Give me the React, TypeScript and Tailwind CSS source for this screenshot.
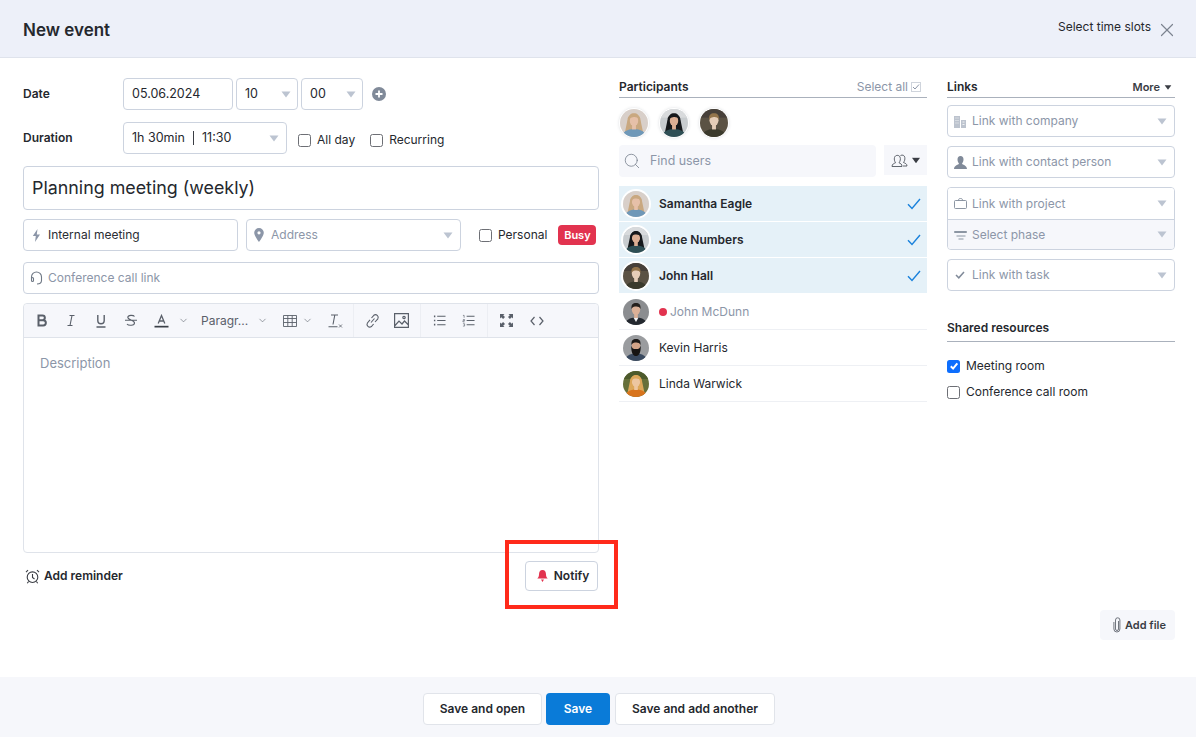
import { useId } from "react";
import type { ReactNode } from "react";
import { ChevronDown, Search, X } from "lucide-react";

const font = "font-['Inter','Liberation_Sans',sans-serif]";

const Caret = ({ className = "" }: { className?: string }) => (
  <svg width="10" height="7" viewBox="0 0 10 7" className={`shrink-0 ${className || "text-[#bcc4d1]"}`}>
    <path d="M0.5 0.5h9L5 6.5z" fill="currentColor" />
  </svg>
);

const Box = ({ checked = false, className = "" }: { checked?: boolean; className?: string }) =>
  checked ? (
    <span className={`flex h-[13px] w-[13px] shrink-0 items-center justify-center rounded-[2.5px] bg-[#0d6efd] ${className}`}>
      <svg width="10" height="10" viewBox="0 0 10 10">
        <path d="M1.8 5.2 4.1 7.6 8.3 2.4" fill="none" stroke="#fff" strokeWidth="2" />
      </svg>
    </span>
  ) : (
    <span className={`h-[13px] w-[13px] shrink-0 rounded-[2.5px] border border-[#6d6f75] bg-white ${className}`} />
  );

const Field = ({
  icon,
  text,
  muted = true,
  caret = true,
  className = "",
}: {
  icon?: ReactNode;
  text: string;
  muted?: boolean;
  caret?: boolean;
  className?: string;
}) => (
  <div className={`flex shrink-0 items-center rounded-[4px] border border-[#ccd3df] bg-white text-[12px] ${className || "h-8"}`}>
    {icon && <span className="flex w-[24px] shrink-0 items-center justify-center">{icon}</span>}
    <span className={`flex-1 truncate ${muted ? "text-[#8c96a8]" : "text-[#2a2d33]"}`}>{text}</span>
    {caret && <Caret className="mr-[7px] text-[#bcc4d1]" />}
  </div>
);

type Look = {
  bg: string;
  skin: string;
  hair: string;
  shirt: string;
  beard?: string;
  long?: boolean;
  collar?: boolean;
  band?: string;
};

const Face = ({ look, size = 26 }: { look: Look; size?: number }) => {
  const id = useId();
  return (
    <svg width={size} height={size} viewBox="0 0 26 26" className="shrink-0">
      <clipPath id={id}>
        <circle cx="13" cy="13" r="13" />
      </clipPath>
      <g clipPath={`url(#${id})`}>
        <rect width="26" height="26" fill={look.bg} />
        {look.band && <rect x="0" y="0" width="26" height="8" fill={look.band} />}
        {look.long && <path d="M7 10c0-7 12-7 12 0l2.500 12H4.500z" fill={look.hair} />}
        <path d="M2 26c0-5 5-7.500 11-7.500S24 21 24 26z" fill={look.shirt} />
        {look.collar && <path d="M10.500 18.500 13 23l2.500-4.500z" fill="#f2f3f5" />}
        <rect x="11.200" y="14" width="3.600" height="5" fill={look.skin} />
        <ellipse cx="13" cy="10.500" rx="4.200" ry="5.200" fill={look.skin} />
        {look.beard && <path d="M8.300 10.500c-.3 8 2 10.500 4.700 10.500s5-2.500 4.700-10.500c-.8 3-2 3.500-4.700 3.500s-3.900-.5-4.700-3.500z" fill={look.beard} />}
        <path d="M8.500 10C8 5.500 10 4 13 4s5 1.500 4.500 6C16.500 7.500 14 7.200 12 7.600c-1.600.3-2.800 1-3.500 2.400z" fill={look.hair} />
        {look.long && <path d="M8 8c-1.500 4-1 7 .8 9l1-1c-1-2.500-1.200-5-.3-7.500zM18 8c1.500 4 1 7-.8 9l-1-1c1-2.500 1.200-5 .3-7.500z" fill={look.hair} />}
      </g>
    </svg>
  );
};

const samantha: Look = { bg: "#d8cfc9", skin: "#e6c0a8", hair: "#c9a880", shirt: "#6f98b8", long: true };
const jane: Look = { bg: "#c8cccf", skin: "#dcae93", hair: "#16181b", shirt: "#2f4f55", long: true, band: "#d8dadc" };
const hall: Look = { bg: "#5b5244", skin: "#e6cdb8", hair: "#94754c", shirt: "#3b3a2c", band: "#47403a" };
const mcdunn: Look = { bg: "#8b8d90", skin: "#dbb097", hair: "#24201d", shirt: "#23282f", collar: true };
const kevin: Look = { bg: "#9a9c9f", skin: "#d3a488", hair: "#1c1917", shirt: "#3a4a60", beard: "#161413" };
const linda: Look = { bg: "#66703a", skin: "#edc6a0", hair: "#dca75a", shirt: "#d8741d", long: true, band: "#4d5a2c" };

const Person = ({ name, look, picked, busy, last }: { name: string; look: Look; picked?: boolean; busy?: boolean; last?: boolean }) => (
  <div
    className={`flex h-9 items-center pl-1 pr-[6px] ${
      picked ? "border-b border-white bg-[#e5f1f8] last-of-type:border-0" : "border-b border-[#eef0f4]"
    } ${last ? "border-[#e9ecf1]" : ""}`}
  >
    <span className={`flex rounded-full ${picked ? "ring-2 ring-white" : ""}`}>
      <Face look={look} />
    </span>
    {busy && <span className="ml-[10px] h-2 w-2 rounded-full bg-[#e2334f]" />}
    <span className={`text-[12px] ${busy ? "ml-[3px] text-[#8c96a8]" : "ml-[10px] text-[#25282e]"} ${picked ? "font-semibold" : ""}`}>
      {name}
    </span>
    {picked && (
      <svg width="14" height="12" viewBox="0 0 14 12" className="ml-auto">
        <path d="M1 6.200 5 10.500 13 1" fill="none" stroke="#1a82dc" strokeWidth="1.400" />
      </svg>
    )}
  </div>
);

const Tool = ({ children, className = "" }: { children: ReactNode; className?: string }) => (
  <span className={`flex h-full shrink-0 items-center justify-center text-[#5a606a] ${className}`}>{children}</span>
);

const glyph = { fill: "none", stroke: "currentColor", strokeWidth: 1.1 };

const Toolbar = () => (
  <div className="flex h-[34px] items-stretch rounded-t-[4px] border-b border-[#dfe3ea] bg-[#f6f7fb]">
    <div className="flex w-[330px] items-center border-r border-[#eceef3] pl-[10px]">
      <Tool className="w-4">
        <svg width="12" height="13" viewBox="0 0 12 13"><path d="M2.500 1.500h4a2.300 2.300 0 0 1 0 4.700h-4zM2.500 6.200h4.700a2.500 2.500 0 0 1 0 5.300H2.500z" fill="none" stroke="currentColor" strokeWidth="2" /></svg>
      </Tool>
      <Tool className="ml-[13px] w-4">
        <svg width="12" height="13" viewBox="0 0 12 13" {...glyph}><path d="M4.500 1.500h5M2.500 11.500h5M7 1.500 5 11.500" /></svg>
      </Tool>
      <Tool className="ml-[14px] w-4">
        <svg width="12" height="14" viewBox="0 0 12 14" {...glyph} strokeWidth={1.400}><path d="M2.800 1v5.500a3.200 3.200 0 0 0 6.400 0V1M1.500 13h9" /></svg>
      </Tool>
      <Tool className="ml-[14px] w-4">
        <svg width="14" height="13" viewBox="0 0 14 13" {...glyph}><path d="M10.500 2.500C9.500 1 4 .7 3.800 3.300 3.600 6 10.500 6 10.500 9c0 2.700-6 3-7.500 1M1 6.300h12" /></svg>
      </Tool>
      <Tool className="ml-[14px] w-4">
        <svg width="15" height="14" viewBox="0 0 15 14"><path d="M4.200 9.500 7.500 1.500l3.300 8M5.300 7h4.400" fill="none" stroke="currentColor" strokeWidth="1.300" /><rect x="0.500" y="11.800" width="14" height="1.700" fill="#3b4048" /></svg>
      </Tool>
      <Tool className="ml-[8px] w-3"><ChevronDown size={11} strokeWidth={1.300} /></Tool>
      <span className="ml-[12px] w-[50px] text-[12px] text-[#5a606a]">Paragr...</span>
      <Tool className="ml-[5px] w-3"><ChevronDown size={11} strokeWidth={1.300} /></Tool>
      <Tool className="ml-[15px] w-[14px]">
        <svg width="14" height="12" viewBox="0 0 14 12" {...glyph} strokeWidth={0.900}><path d="M.5.500h13v11H.500zM.5 3.500h13M.5 7.500h13M4.800.500v11M9.200.500v11" /></svg>
      </Tool>
      <Tool className="ml-[4px] w-3"><ChevronDown size={11} strokeWidth={1.300} /></Tool>
      <Tool className="ml-[15px] w-[15px]">
        <svg width="15" height="14" viewBox="0 0 15 14" {...glyph}><path d="M3 1h7M6.800 1 5 10.500M.500 12.800h9" /><path d="M11 10.500l3 3M14 10.500l-3 3" strokeWidth={0.800} /></svg>
      </Tool>
    </div>
    <div className="flex w-[67px] items-center border-r border-[#eceef3] pl-[11px]">
      <Tool className="w-[15px]">
        <svg width="15" height="16" viewBox="0 0 15 16" {...glyph}><path d="M6 9.500 9.500 5.500M5 6.800 2.400 10a2.700 2.700 0 0 0 4 3.500L8.600 11M6.500 5l2.300-2.700a2.700 2.700 0 0 1 4 3.500L10 9" /></svg>
      </Tool>
      <Tool className="ml-[14px] w-[15px]">
        <svg width="15" height="15" viewBox="0 0 15 15" {...glyph} strokeWidth={1.200}><path d="M.6.600h13.800v13.800H.600zM1 12.500l4-4.500 3 3 2.500-3 3.500 3.500" /><circle cx="10" cy="4.500" r="1.200" /></svg>
      </Tool>
    </div>
    <div className="flex w-[67px] items-center border-r border-[#eceef3] pl-[12px]">
      <Tool className="w-[13px]">
        <svg width="14" height="13" viewBox="0 0 14 13" {...glyph}><path d="M4.500 2h9M4.500 6.500h9M4.500 11h9" /><path d="M1 2h1.500M1 6.500h1.500M1 11h1.500" strokeWidth={1.800} /></svg>
      </Tool>
      <Tool className="ml-[16px] w-[13px]">
        <svg width="14" height="13" viewBox="0 0 14 13" {...glyph}><path d="M5 2h8.500M5 6.500h8.500M5 11h8.500" /><path d="M1 1h1.300v2.500M1 5.500h1.800v1.200H1V8h1.800M1 10h1.800v2.500H1" strokeWidth={0.700} /></svg>
      </Tool>
    </div>
    <div className="flex items-center pl-[11px]">
      <Tool className="w-[14px]">
        <svg width="13" height="13" viewBox="0 0 13 13" fill="currentColor"><path d="M0 0h4.500L3.200 1.300 5 3.100 3.100 5 1.300 3.200 0 4.500zM13 0v4.500l-1.300-1.300L9.900 5 8 3.100l1.800-1.800L8.500 0zM0 13V8.500l1.300 1.300L3.100 8 5 9.900l-1.800 1.800L4.500 13zM13 13H8.500l1.300-1.300L8 9.900 9.900 8l1.800 1.800L13 8.500z" /></svg>
      </Tool>
      <Tool className="ml-[17px] w-[14px]">
        <svg width="14" height="10" viewBox="0 0 14 10" {...glyph} strokeWidth={1.200}><path d="M4.500 1 1 5l3.500 4M9.500 1 13 5 9.500 9" /></svg>
      </Tool>
    </div>
  </div>
);

export default function App() {
  return (
    <div className={`relative flex h-[737px] w-[1196px] flex-col overflow-hidden bg-white text-[12px] text-[#25282e] ${font}`}>
      {/* header */}
      <header className="flex h-[58px] shrink-0 items-center justify-between border-b border-[#dfe3ec] bg-[#edf0f9] pl-[23px] pr-[18px]">
        <h1 className="mt-[5px] text-[17px] font-semibold text-[#25282e]">New event</h1>
        <div className="flex items-start">
          <span className="mt-[2px] text-[12px] text-[#25282e]">Select time slots</span>
          <X size={22} strokeWidth={1.300} className="ml-[5px] mt-[3px] text-[#7c8390]" />
        </div>
      </header>

      <main className="flex min-h-0 flex-1 pb-[37px] pl-[23px] pt-5">
        {/* form */}
        <section className="w-[576px] shrink-0">
          <div className="flex h-8 items-center text-[12.500px]">
            <span className="w-[100px] text-[12px] font-semibold">Date</span>
            <div className="flex h-8 w-[110px] items-center rounded-[4px] border border-[#ccd3df] pl-2">05.06.2024</div>
            <div className="ml-[3px] flex h-8 w-[62px] items-center justify-between rounded-[4px] border border-[#ccd3df] pl-2 pr-[6px]">10<Caret /></div>
            <div className="ml-[3px] flex h-8 w-[62px] items-center justify-between rounded-[4px] border border-[#ccd3df] pl-2 pr-[6px]">00<Caret /></div>
            <svg width="14" height="14" viewBox="0 0 14 14" className="ml-[9px]">
              <circle cx="7" cy="7" r="7" fill="#808a99" />
              <path d="M7 3.500v7M3.500 7h7" stroke="#fff" strokeWidth="1.800" />
            </svg>
          </div>
          <div className="mt-3 flex h-8 items-center">
            <span className="w-[100px] font-semibold">Duration</span>
            <div className="flex h-8 w-[164px] items-center rounded-[4px] border border-[#ccd3df] pl-2 pr-[7px] text-[12.500px]">
              1h 30min
              <span className="mx-[8px] h-[14px] w-px bg-[#3a3d44]" />
              11:30
              <Caret className="ml-auto text-[#bcc4d1]" />
            </div>
            <div className="ml-[11px] mt-[4px] flex items-center">
              <Box />
              <span className="ml-[6px]">All day</span>
              <Box className="ml-[15px]" />
              <span className="ml-[6px]">Recurring</span>
            </div>
          </div>
          <div className="mt-3 flex h-[44px] items-center rounded-[4px] border border-[#ccd3df] pl-2 text-[17.850px] text-[#25282e]">
            Planning meeting (weekly)
          </div>
          <div className="mt-[9px] flex h-8 items-center">
            <Field
              className="h-8 w-[215px]"
              muted={false}
              caret={false}
              text="Internal meeting"
              icon={<svg width="9" height="13" viewBox="0 0 9 13"><path d="M5.500 0 .8 7h3L3 13l5-7.500H4.800z" fill="#8c96a8" /></svg>}
            />
            <Field
              className="ml-2 h-8 w-[215px]"
              text="Address"
              icon={<svg width="10" height="14" viewBox="0 0 10 14"><path fillRule="evenodd" d="M5 0a4.800 4.800 0 0 1 4.800 4.800C9.800 8 5 14 5 14S.2 8 .2 4.800A4.800 4.800 0 0 1 5 0zm0 3.200a1.600 1.600 0 1 0 0 3.200 1.600 1.600 0 0 0 0-3.200z" fill="#8c96a8" /></svg>}
            />
            <Box className="ml-[18px]" />
            <span className="ml-[6px]">Personal</span>
            <span className="ml-[11px] flex h-5 w-[38px] shrink-0 items-center justify-center rounded-[4px] bg-[#e2334f] text-[11px] font-semibold text-white">Busy</span>
          </div>
          <Field
            className="mt-[11px] h-8"
            caret={false}
            text="Conference call link"
            icon={<svg width="13" height="14" viewBox="0 0 13 14" fill="none" stroke="#6f7885" strokeWidth="1.100"><path d="M1.500 8V6a5 5 0 0 1 10 0v2M1.500 6.500v3a1 1 0 0 0 2 0v-2a1 1 0 0 0-2 0zM11.500 6.500v3c0 2.500-2 3.500-4.500 3.500" /></svg>}
          />
          <div className="relative mt-[9px] h-[250px] rounded-[4px] border border-[#dfe3ea]">
            <Toolbar />
            <p className="pl-4 pt-4 text-[13px] text-[#8c96a8]">Description</p>
          </div>
          <div className="mt-2 flex h-[30px] items-center pr-px">
            <svg width="15" height="15" viewBox="0 0 15 15" fill="none" stroke="#3a3d44" strokeWidth="1.100" className="ml-[2px]">
              <circle cx="7.500" cy="8.200" r="5.300" />
              <path d="M7.500 5v3.500l2 1.500M1 3.200 3 1.200M14 3.200l-2-2M3.600 12.500l-1.300 1.800M11.400 12.500l1.300 1.800" />
            </svg>
            <span className="ml-[4px] font-semibold">Add reminder</span>
            <div className="ml-auto flex h-[30px] w-[73px] items-center justify-center rounded-[4px] border border-[#ccd3df] pl-[3px] font-semibold">
              <svg width="11" height="12" viewBox="0 0 11 12" className="mr-[6px]">
                <path d="M5.500 0C8 0 9 2 9 4.500c0 2 .8 3.200 1.700 4H.3C1.200 7.700 2 6.500 2 4.500 2 2 3 0 5.500 0zM4 9.500h3L5.500 12z" fill="#e2334f" />
              </svg>
              Notify
            </div>
          </div>
        </section>

        {/* participants */}
        <section className="ml-5 w-[308px] shrink-0">
          <div className="flex h-5 items-start justify-between border-b border-[#aab1bc]">
            <span className="font-semibold">Participants</span>
            <span className="mr-[6px] flex items-center text-[#8c96a8]">
              Select all
              <span className="ml-[3px] flex h-[10px] w-[10px] items-center justify-center border border-[#cfd4dc]">
                <svg width="8" height="8" viewBox="0 0 8 8"><path d="M1 4l2 2 4-4.500" fill="none" stroke="#8c96a8" /></svg>
              </span>
            </span>
          </div>
          <div className="mt-[10px] flex gap-[10px]">
            {[samantha, jane, hall].map((look, i) => (
              <span key={i} className="flex h-[30px] w-[30px] items-center justify-center rounded-full bg-white shadow-[0_0_3px_rgba(60,70,90,0.18)]">
                <Face look={look} size={28} />
              </span>
            ))}
          </div>
          <div className="mt-[7px] flex items-start">
            <div className="flex h-8 w-[257px] items-center rounded-[4px] bg-[#f6f7fb] pl-[4px] text-[#8c96a8]">
              <Search size={18} strokeWidth={1} className="text-[#6f7885]" />
              <span className="ml-[9px] text-[12.400px]">Find users</span>
            </div>
            <div className="ml-2 flex h-[30px] w-[43px] items-center justify-center bg-[#f6f7fb]">
              <svg width="17" height="13" viewBox="0 0 17 13" fill="none" stroke="#50565f" strokeWidth="0.900">
                <path d="M1 12.500c0-2.500 2-3 3.500-3.700C3.500 7 3 5.500 3.500 3.500 4 1 8 .5 9 3c.8 2 .3 4-1 5.800 1.500.7 3 1.200 3 3.700z" />
                <path d="M9.500 1.500c2-1 4-.2 4.300 2 .3 2-.2 3.500-1.300 5 1.500.7 3.500 1.200 3.500 3.500h-4" />
              </svg>
              <Caret className="ml-[3px] scale-90 text-[#3a3d44]" />
            </div>
          </div>
          <div className="mt-[9px]">
            <Person name="Samantha Eagle" look={samantha} picked />
            <Person name="Jane Numbers" look={jane} picked />
            <Person name="John Hall" look={hall} picked />
            <Person name="John McDunn" look={mcdunn} busy />
            <Person name="Kevin Harris" look={kevin} />
            <Person name="Linda Warwick" look={linda} last />
          </div>
        </section>

        {/* links */}
        <section className="ml-5 flex w-[228px] shrink-0 flex-col">
          <div className="flex h-5 items-start justify-between border-b border-[#aab1bc]">
            <span className="font-semibold">Links</span>
            <span className="mr-[2px] mt-[1px] flex items-center text-[11px] font-semibold text-[#3a3d44]">
              More
              <Caret className="ml-[3px] scale-75 text-[#3a3d44]" />
            </span>
          </div>
          <Field
            className="mt-[7px] h-8"
            text="Link with company"
            icon={<svg width="12" height="13" viewBox="0 0 12 13" fill="#bcc3ce"><path d="M0 1h6v12H0zM7 5h5v8H7z" /><path d="M1.500 3h1M3.500 3h1M1.500 5.500h1M3.500 5.500h1M1.500 8h1M3.500 8h1M8.500 7h2M8.500 9.500h2" stroke="#fff" strokeWidth="0.800" /></svg>}
          />
          <Field
            className="mt-[9px] h-8"
            text="Link with contact person"
            icon={<svg width="13" height="13" viewBox="0 0 13 13" fill="#808a99"><path d="M6.500 0c2 0 3 1.500 3 3.500S8.500 7 8 7.600c.2 1.400 5 1.600 5 5.400H0c0-3.800 4.800-4 5-5.400C4.500 7 3.500 5.500 3.500 3.500S4.500 0 6.500 0z" /></svg>}
          />
          <div className="mt-[9px] overflow-hidden rounded-[4px] border border-[#ccd3df]">
            <Field
              className="h-[31px] rounded-none border-0"
              text="Link with project"
              icon={<svg width="13" height="11" viewBox="0 0 13 11" fill="none" stroke="#808a99" strokeWidth="0.900"><path d="M1.500 2.500h10a1 1 0 0 1 1 1v6a1 1 0 0 1-1 1h-10a1 1 0 0 1-1-1v-6a1 1 0 0 1 1-1zM4.500 2.500C4.500 1 5 .5 6.500.5s2 .5 2 2" /></svg>}
            />
            <div className="flex h-[30px] items-center border-t border-[#ccd3df] bg-[#f6f7fb] text-[#8c96a8]">
              <span className="flex w-[24px] shrink-0 items-center justify-center">
                <svg width="13" height="10" viewBox="0 0 13 10" fill="none" stroke="#808a99" strokeWidth="0.900"><path d="M.5 1.500h12v1h-12zM2.500 6h9M4.500 9h5" /></svg>
              </span>
              <span className="flex-1">Select phase</span>
              <Caret className="mr-[7px] text-[#bcc4d1]" />
            </div>
          </div>
          <Field
            className="mt-[9px] h-8"
            text="Link with task"
            icon={<svg width="10" height="8" viewBox="0 0 10 8"><path d="M1 4l2.800 2.800L9 1" fill="none" stroke="#808a99" strokeWidth="1.500" /></svg>}
          />
          <div className="mt-[28px] flex h-[23px] shrink-0 items-start border-b border-[#aab1bc] font-semibold">Shared resources</div>
          <div className="mt-4 flex h-4 items-center">
            <Box checked />
            <span className="ml-[6px]">Meeting room</span>
          </div>
          <div className="mt-[10px] flex h-4 items-center">
            <Box />
            <span className="ml-[6px]">Conference call room</span>
          </div>
          <div className="mt-auto flex h-[30px] w-[75px] shrink-0 items-center self-end rounded-[4px] bg-[#f6f7fb] pl-[13px] text-[11px] font-semibold text-[#3a3d44]">
            <svg width="8" height="16" viewBox="0 0 8 16" fill="none" stroke="#50565f" strokeWidth="0.800" className="mr-[4px] shrink-0">
              <path d="M5.500 4v8a1.500 1.500 0 0 1-3 0V3a2.200 2.200 0 0 1 4.400 0v9a3 3 0 0 1-6 0V5" />
            </svg>
            Add file
          </div>
        </section>
      </main>

      <footer className="flex h-[60px] shrink-0 items-start justify-center gap-[4px] bg-[#f6f7fb] pl-[2px] pt-4 font-semibold">
        <div className="flex h-8 w-[119px] items-center justify-center rounded-[4px] border border-[#e1e4ea] bg-white">Save and open</div>
        <div className="flex h-8 w-[64px] items-center justify-center rounded-[4px] bg-[#0a7bd8] text-white">Save</div>
        <div className="ml-px flex h-8 w-[160px] items-center justify-center rounded-[4px] border border-[#e1e4ea] bg-white">Save and add another</div>
      </footer>

      {/* red annotation */}
      <div className="pointer-events-none absolute left-[505px] top-[540px] h-[69px] w-[113px] border-4 border-[#ff2a1a]" />
    </div>
  );
}
